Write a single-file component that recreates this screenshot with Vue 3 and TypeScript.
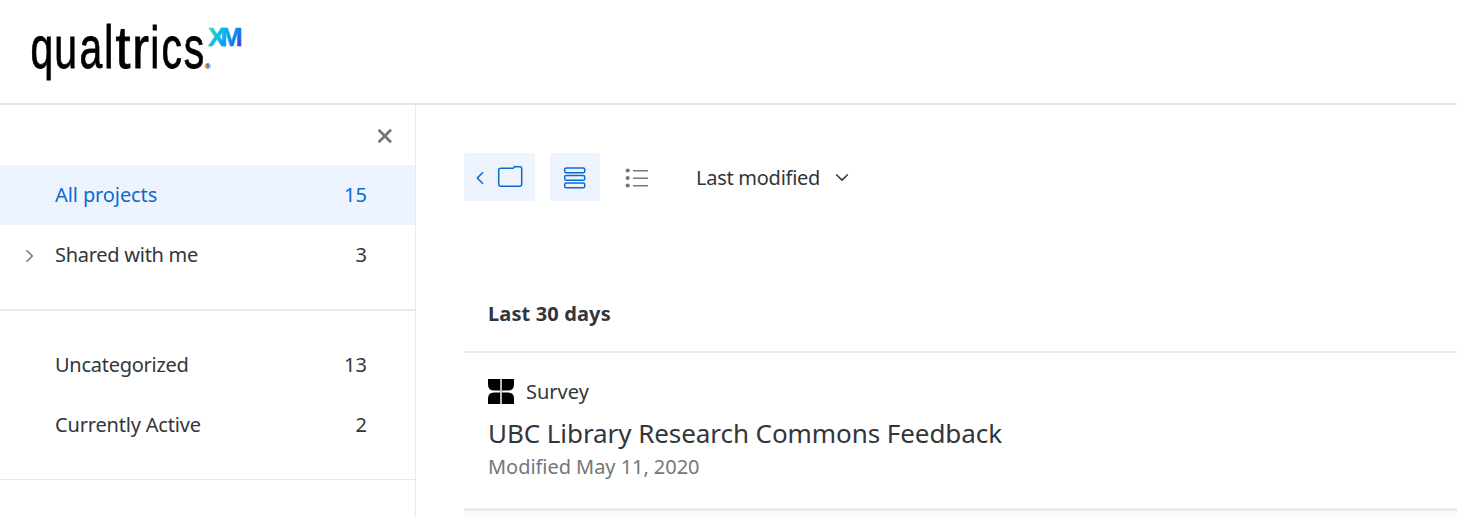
<script setup lang="ts">
interface NavItem {
  label: string
  count: number
  active?: boolean
  expandable?: boolean
  cls: string
}

const primary: NavItem[] = [
  { label: 'All projects', count: 15, active: true, cls: 't-all' },
  { label: 'Shared with me', count: 3, expandable: true, cls: 't-shared' },
]
const folders: NavItem[] = [
  { label: 'Uncategorized', count: 13, cls: 't-uncat' },
  { label: 'Currently Active', count: 2, cls: 't-active' },
]
</script>

<template>
  <div class="page">
    <header class="header">
      <svg class="logo" width="260" height="103" viewBox="0 0 260 103">
        <defs>
          <linearGradient id="xm" gradientUnits="userSpaceOnUse" x1="209" y1="27" x2="243" y2="47">
            <stop offset="0" stop-color="#37dcae" />
            <stop offset="0.35" stop-color="#08b9ec" />
            <stop offset="0.65" stop-color="#0a8fef" />
            <stop offset="1" stop-color="#4a20dc" />
          </linearGradient>
        </defs>
        <g class="word">
          <text transform="scale(0.7 1)" x="43.6 77.4 113.5 148.6" y="68.3">qua<tspan class="tall">l</tspan></text>
          <text transform="translate(115.6 68.3) scale(0.92 1)">t</text>
          <text transform="translate(132.3 68.3) scale(0.86 1)">r</text>
          <text transform="scale(0.7 1)" x="214.6 230.8 262.5" y="68.3">ics</text>
        </g>
        <text class="reg" x="204.8" y="69">®</text>
        <text class="xm" x="208 220.6" y="46" fill="url(#xm)" stroke="url(#xm)">XM</text>
      </svg>
    </header>

    <div class="body">
      <aside class="sidebar">
        <div class="close-row">
          <svg width="16" height="16" viewBox="0 0 16 16">
            <path d="M1.6 1.8 14 14.2M14 1.8 1.6 14.2" stroke="#73777a" stroke-width="2.8" fill="none" />
          </svg>
        </div>
        <nav class="group first">
          <div v-for="item in primary" :key="item.label" class="row" :class="{ active: item.active }">
            <span class="arrow">
              <svg v-if="item.expandable" width="9" height="14" viewBox="0 0 9 14">
                <path d="M1.4 1.2 7.3 7 1.4 12.8" stroke="#73777a" stroke-width="1.5" fill="none" />
              </svg>
            </span>
            <span class="label" :class="item.cls">{{ item.label }}</span>
            <span class="count">{{ item.count }}</span>
          </div>
        </nav>
        <nav class="group second">
          <div v-for="item in folders" :key="item.label" class="row">
            <span class="arrow"></span>
            <span class="label" :class="item.cls">{{ item.label }}</span>
            <span class="count">{{ item.count }}</span>
          </div>
        </nav>
      </aside>

      <main class="main">
        <div class="toolbar">
          <div class="btn folder">
            <svg width="71" height="48" viewBox="0 0 71 48" fill="none" stroke="#0b6ad0" stroke-width="1.5">
              <path d="M19 19.2 13.3 25 19 30.8" stroke-width="1.6" />
              <path d="M36.7 15.2H48.3Q49.5 15.2 50.1 14.3T51.7 13.7H56Q57.7 13.7 57.7 15.4V31Q57.7 33.3 55.4 33.3H37Q34.7 33.3 34.7 31V17.2Q34.7 15.2 36.7 15.2Z" />
            </svg>
          </div>
          <div class="btn cards">
            <svg width="50" height="48" viewBox="0 0 50 48" fill="none" stroke="#0b6ad0" stroke-width="1.5">
              <rect x="14.7" y="15" width="20" height="4.8" rx="1.6" />
              <rect x="14.7" y="22.5" width="20" height="4.8" rx="1.6" />
              <rect x="14.7" y="30" width="20" height="4.8" rx="1.6" />
            </svg>
          </div>
          <svg class="list" width="25" height="20" viewBox="0 0 25 20" fill="#73777a">
            <circle cx="2.7" cy="2.5" r="2.1" /><circle cx="2.7" cy="10" r="2.1" /><circle cx="2.7" cy="17.5" r="2.1" />
            <path d="M8 2h15v1.4H8zM8 9.5h15v1.4H8zM8 17h15v1.4H8z" />
          </svg>
          <span class="sort t-sort">Last modified</span>
          <svg class="chevron" width="14" height="9" viewBox="0 0 14 9">
            <path d="M1.2 1.5 7 7.1 12.8 1.5" stroke="#32363a" stroke-width="1.5" fill="none" />
          </svg>
        </div>

        <h2 class="section">Last 30 days</h2>

        <article class="project">
          <div class="kind">
            <svg width="26" height="25" viewBox="0 0 26 25">
              <path d="M0 0H12.2V11.5H6Q0 11.5 0 5.5ZM13.8 0H26V5.5Q26 11.5 20 11.5H13.8ZM0 25V19.5Q0 13.5 6 13.5H12.2V25ZM13.8 13.5H20Q26 13.5 26 19.5V25H13.8Z" />
              <path d="M12.2 0h1.6v25h-1.6z" fill="#b5b5b5" />
            </svg>
            <span>Survey</span>
          </div>
          <div class="title">UBC Library Research Commons Feedback</div>
          <div class="modified">Modified May 11, 2020</div>
        </article>
        <div class="next"></div>
      </main>
    </div>
  </div>
</template>

<style>
html,
body {
  margin: 0;
  overflow: hidden;
}
</style>

<style scoped>
.page {
  box-sizing: border-box;
  height: 517px;
  display: flex;
  flex-direction: column;
  overflow: hidden;
  background: #fff;
  color: #32363a;
  font-family: 'Noto Sans', 'Open Sans', sans-serif;
  font-size: 20px;
  white-space: nowrap;
}
.header {
  height: 103px;
  flex: none;
  border-bottom: 2px solid #e6e6e6;
}
svg {
  display: block;
  flex: none;
}
.word {
  font: 58.5px 'Liberation Sans', sans-serif;
  fill: #000;
  stroke: #000;
  stroke-width: 0.8;
}
.tall {
  font-size: 61.5px;
}
.reg {
  font: bold 8px 'Liberation Sans', sans-serif;
  fill: #000;
}
.xm {
  font: bold 26.5px 'Liberation Sans', sans-serif;
  stroke-width: 0.5;
}
.body {
  display: flex;
  flex: 1;
  min-height: 0;
}
.sidebar {
  width: 415px;
  flex: none;
  border-right: 1px solid #e9eaeb;
}
.close-row {
  height: 60px;
  display: flex;
  align-items: center;
  justify-content: flex-end;
  padding-right: 22px;
  padding-top: 2px;
  box-sizing: border-box;
}
.group.first {
  height: 144px;
  border-bottom: 2px solid #ebebeb;
}
.group.second {
  height: 144px;
  padding-top: 24px;
  border-bottom: 1px solid #e9eaeb;
}
.row {
  height: 60px;
  display: flex;
  align-items: center;
  padding-right: 48px;
}
.row.active {
  background: #edf4fd;
  color: #0b6ad0;
}
.arrow {
  width: 30px;
  padding-left: 25px;
}
.arrow svg {
  margin-top: 1px;
}
.label,
.count {
  padding-bottom: 2px;
}
.count {
  margin-left: auto;
}
.t-all {
  letter-spacing: -0.1px;
}
.t-shared,
.t-uncat,
.t-sort {
  letter-spacing: -0.27px;
}
.t-active {
  letter-spacing: -0.18px;
}
.main {
  flex: 1;
  padding: 48px 0 0 48px;
  min-width: 0;
}
.toolbar {
  display: flex;
  align-items: center;
  height: 48px;
}
.btn {
  background: #edf4fd;
  border-radius: 3px;
}
.cards {
  margin-left: 15px;
}
.list {
  margin: 2px 0 0 25px;
}
.sort {
  margin-left: 46px;
  width: 124px;
}
.chevron {
  margin-left: 15px;
}
.section {
  margin: 74px 0 0;
  height: 76px;
  line-height: 78px;
  padding-left: 24px;
  font-size: 20px;
  font-weight: 700;
  letter-spacing: 0.13px;
  border-bottom: 2px solid #ebebeb;
}
.project {
  height: 155px;
  box-sizing: border-box;
  padding: 25px 0 0 24px;
}
.kind {
  display: flex;
  align-items: center;
  gap: 12px;
  height: 26px;
}
.title {
  font-size: 26px;
  line-height: 36px;
  margin-top: 11px;
  letter-spacing: -0.07px;
}
.modified {
  margin-top: 1px;
  line-height: 30px;
  letter-spacing: -0.05px;
  color: #73777a;
}
.next {
  height: 30px;
  border-top: 3px solid #ebebeb;
  background: #fafafa;
}
</style>
